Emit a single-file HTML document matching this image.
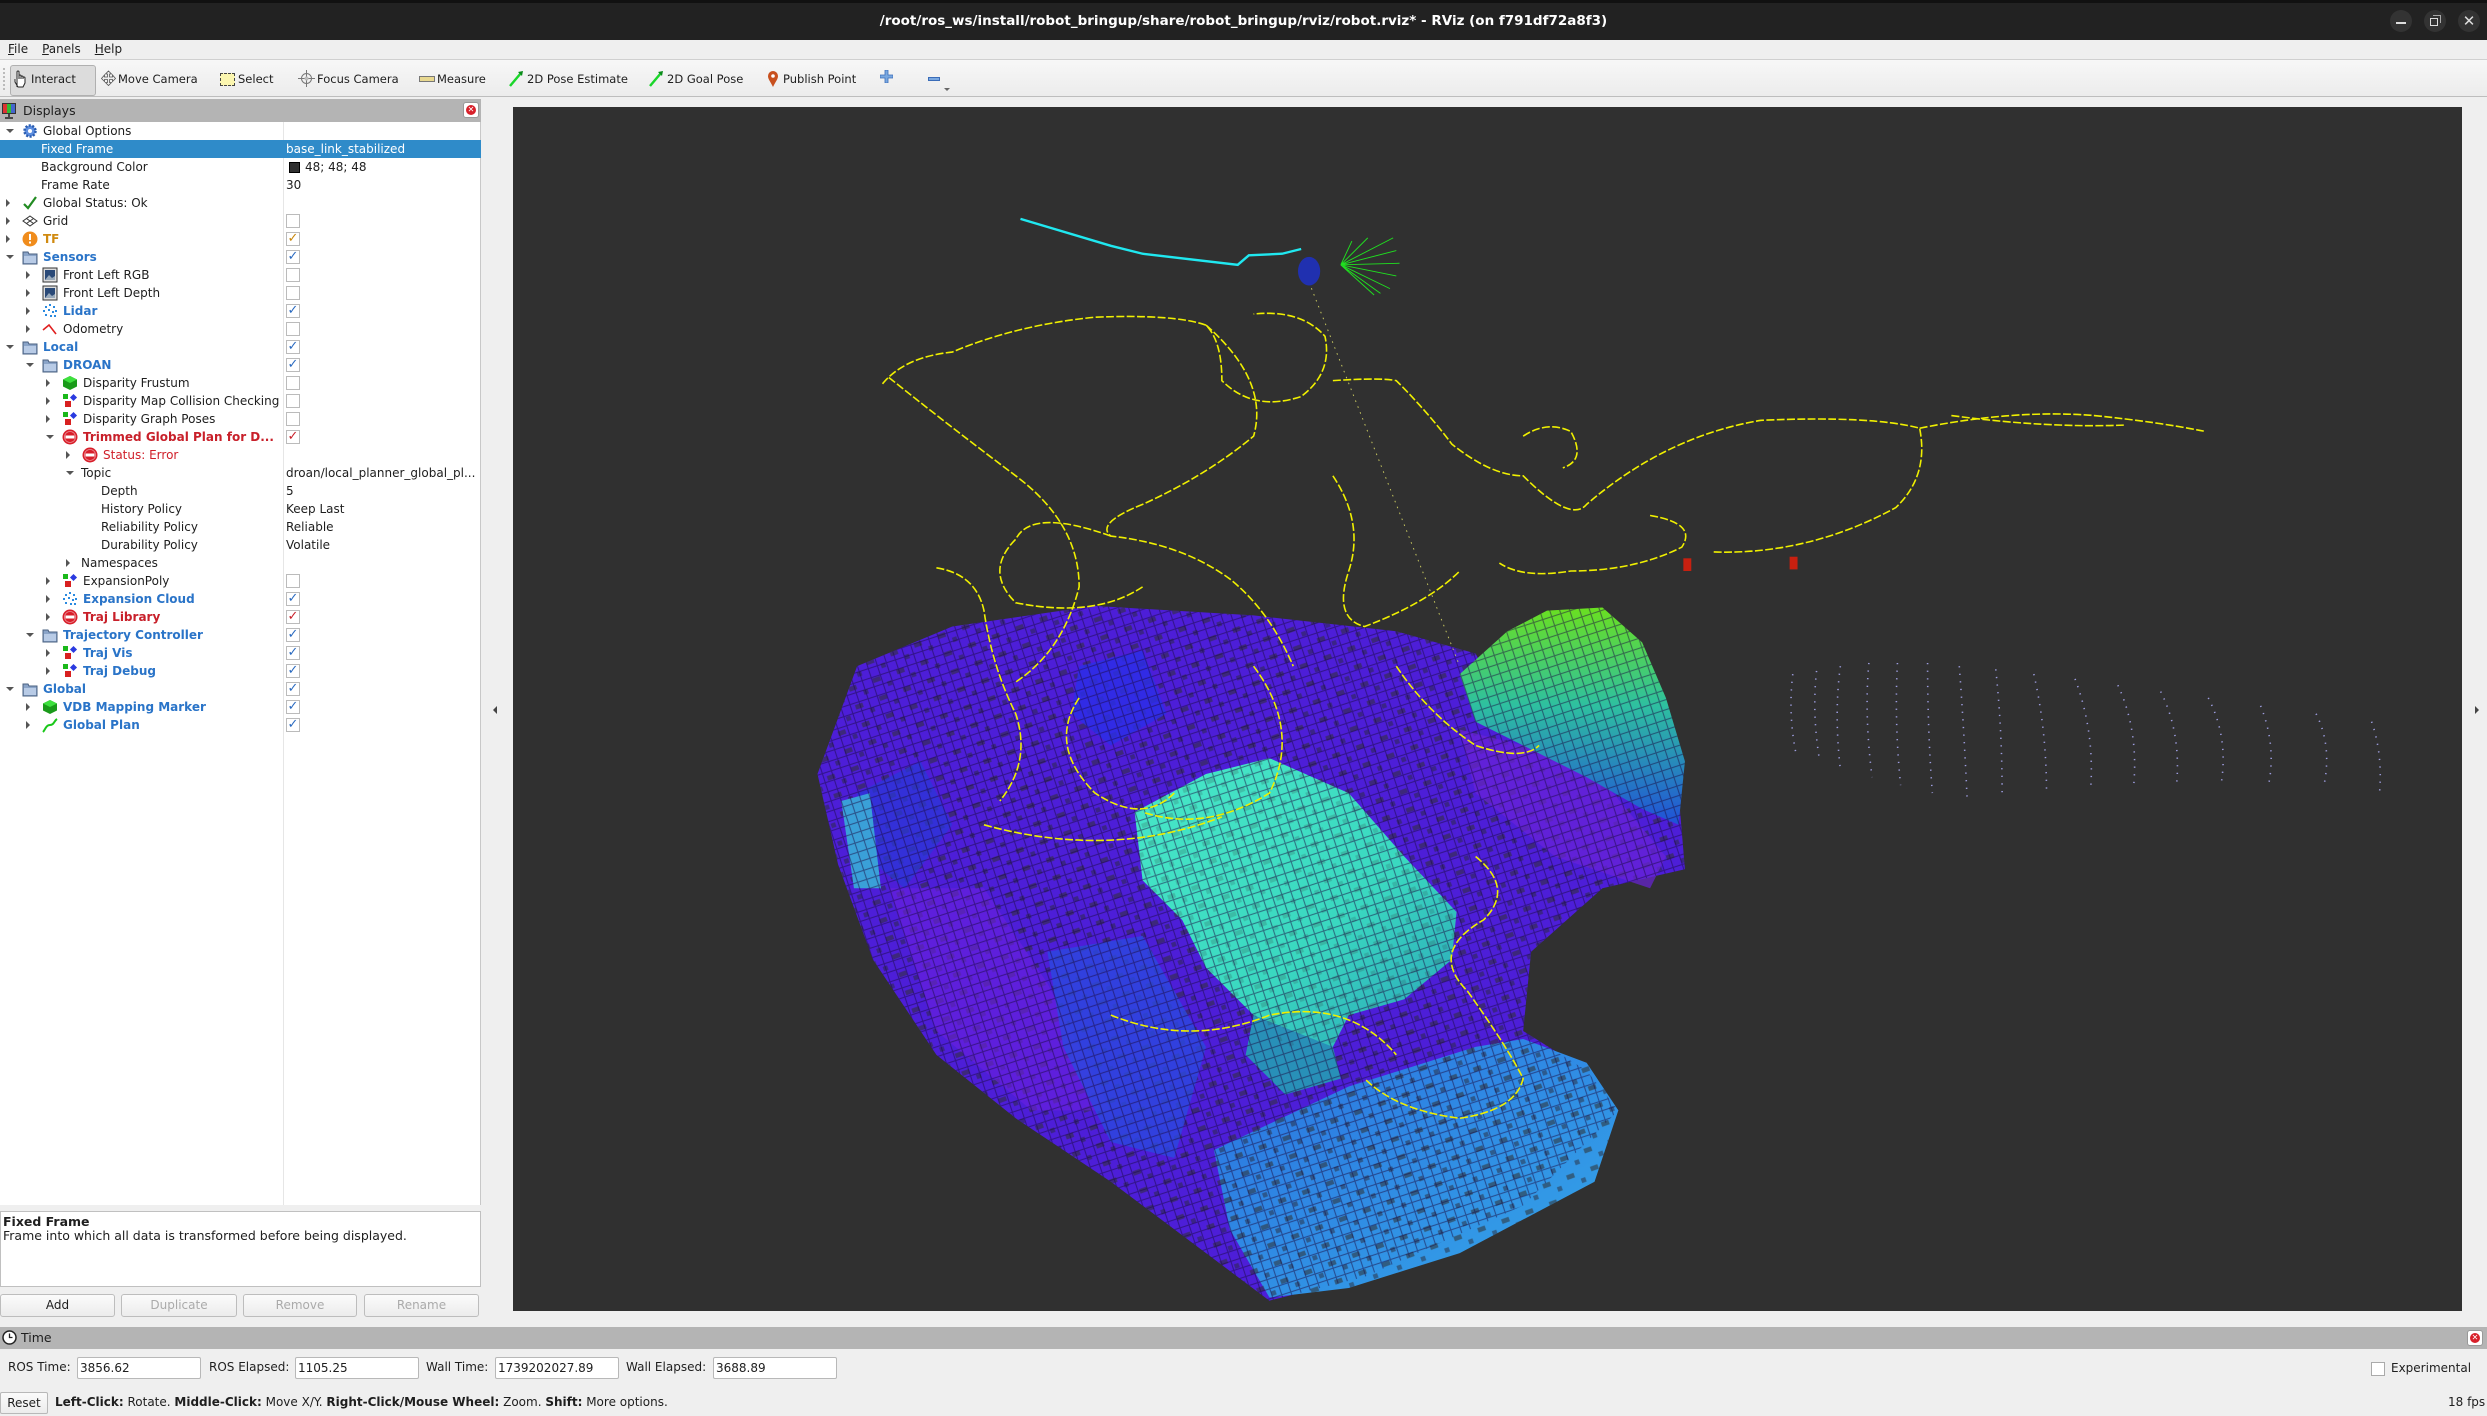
<!DOCTYPE html>
<html><head><meta charset="utf-8">
<style>
*{margin:0;padding:0;box-sizing:border-box}
body{width:2487px;height:1416px;overflow:hidden;background:#efefef;font-family:"DejaVu Sans","Liberation Sans",sans-serif;font-size:12px;color:#1e1e1e;position:relative}
.a{position:absolute}
.title{left:0;top:0;width:2487px;height:40px;background:#222;border-top:3px solid #111;color:#fff;font-weight:bold;font-size:13.5px;text-align:center;line-height:36px}
.wb{width:22px;height:22px;border-radius:50%;background:#333;top:10px}
.menu{left:0;top:40px;width:2487px;height:19px;background:#efefef;font-size:12px;line-height:19px}
.menu span{margin-left:8px;margin-right:6px}
.tb{left:0;top:59px;width:2487px;height:38px;background:linear-gradient(#f7f7f7,#ececec);border-top:1px solid #d0d0d0;border-bottom:1px solid #bdbdbd;font-size:11.5px}
.tb .t{position:absolute;top:12px;white-space:nowrap}
.tb svg{position:absolute;top:10px}
.hdr{background:#b4b4b4;height:23px;line-height:23px;font-size:12.5px}
.tree{left:0;top:122px;width:481px;height:1083px;background:#fff;border-right:1px solid #c8c8c8}
.row{position:absolute;left:0;width:481px;height:18px;line-height:18px;white-space:nowrap}
.row .tx{position:absolute;top:0}
.row .ic{position:absolute;top:1px}
.ar{position:absolute;top:5px;width:0;height:0}
.r{border-left:4px solid #555;border-top:4px solid transparent;border-bottom:4px solid transparent;top:5px}
.d{border-top:4px solid #555;border-left:4px solid transparent;border-right:4px solid transparent;top:7px}
.v{position:absolute;left:286px;top:0}
.cb{position:absolute;left:286px;top:2px;width:14px;height:14px;border:1px solid #bbb;background:#fff;font-size:13px;font-weight:bold;line-height:12px;text-align:center}
.blue{color:#2a74c8;font-weight:bold}
.red{color:#c8202a;font-weight:bold}
.btn{position:absolute;top:1294px;height:23px;border:1px solid #bdbdbd;border-radius:3px;background:linear-gradient(#fbfbfb,#ececec);text-align:center;line-height:21px;font-size:12px}
.fld{position:absolute;top:1357px;height:22px;border:1px solid #b8b8b8;border-radius:2px;background:#fff;line-height:20px;padding-left:2px;font-size:12px}
.lb{position:absolute;top:1360px;font-size:12px}
</style></head><body>

<div class="a title">/root/ros_ws/install/robot_bringup/share/robot_bringup/rviz/robot.rviz* - RViz (on f791df72a8f3)</div>
<div class="a wb" style="left:2390px"><div class="a" style="left:6px;top:12px;width:10px;height:2px;background:#ddd"></div></div>
<div class="a wb" style="left:2424px"><div class="a" style="left:6px;top:8px;width:8px;height:8px;border:1.5px solid #ddd"></div><div class="a" style="left:9px;top:5px;width:8px;height:8px;border-top:1.5px solid #aaa;border-right:1.5px solid #aaa"></div></div>
<div class="a wb" style="left:2458px;color:#ddd;font-size:15px;text-align:center;line-height:22px">✕</div>

<div class="a menu"><span><u>F</u>ile</span><span><u>P</u>anels</span><span><u>H</u>elp</span></div>

<div class="a tb">
 <div class="a" style="left:3px;top:8px;width:3px;height:22px;border-left:2px dotted #bbb"></div>
 <div class="a" style="left:10px;top:5px;width:86px;height:31px;background:#dcdcdc;border:1px solid #b0b0b0;border-radius:3px"></div>
 <svg style="left:13px" width="16" height="18" viewBox="0 0 16 18"><path d="M4 17V8M4 8V2a1 1 0 012 0v7M6 6a1 1 0 012 0v3M8 7a1 1 0 012 0v2M10 8a1 1 0 012 0v5l-2 4H5L2 12V9" fill="#fff" stroke="#222" stroke-width="1"/></svg>
 <div class="t" style="left:31px">Interact</div>
 <svg style="left:100px" width="17" height="17" viewBox="0 0 17 17"><path d="M8.5 1l3 3h-2v3h3V5l3 3.5-3 3v-2h-3v3h2l-3 3-3-3h2v-3h-3v2l-3-3 3-3.5v2h3V4h-2z" fill="#eee" stroke="#555" stroke-width=".8"/></svg>
 <div class="t" style="left:118px">Move Camera</div>
 <div class="a" style="left:220px;top:13px;width:15px;height:13px;background:#fbf6b0;border:1px dashed #444"></div>
 <div class="t" style="left:238px">Select</div>
 <svg style="left:298px" width="17" height="17" viewBox="0 0 17 17"><circle cx="8.5" cy="8.5" r="5" fill="none" stroke="#777"/><path d="M8.5 0v17M0 8.5h17" stroke="#777"/><circle cx="8.5" cy="8.5" r="2" fill="#bbb"/></svg>
 <div class="t" style="left:317px">Focus Camera</div>
 <div class="a" style="left:419px;top:16px;width:16px;height:6px;background:#e8d890;border:1px solid #777"></div>
 <div class="t" style="left:437px">Measure</div>
 <svg style="left:508px" width="16" height="17" viewBox="0 0 16 17"><path d="M2 16L13 3" stroke="#1ad62a" stroke-width="2.5"/><path d="M10 2l5-1-1 5z" fill="#0a8a1a"/></svg>
 <div class="t" style="left:527px">2D Pose Estimate</div>
 <svg style="left:648px" width="16" height="17" viewBox="0 0 16 17"><path d="M2 16L13 3" stroke="#1ad62a" stroke-width="2.5"/><path d="M10 2l5-1-1 5z" fill="#0a8a1a"/></svg>
 <div class="t" style="left:667px">2D Goal Pose</div>
 <svg style="left:767px" width="12" height="18" viewBox="0 0 12 18"><path d="M6 17C3 11 1 9 1 6a5 5 0 0110 0c0 3-2 5-5 11z" fill="#c8501e"/><circle cx="6" cy="6" r="1.8" fill="#fff"/></svg>
 <div class="t" style="left:783px">Publish Point</div>
 <svg style="left:880px" width="13" height="13" viewBox="0 0 13 13" ><path d="M5 0h3v5h5v3H8v5H5V8H0V5h5z" fill="#7aa8e0" stroke="#3a6cb8" stroke-width=".8"/></svg>
 <div class="a" style="left:928px;top:17px;width:12px;height:4px;background:#7aa8e0;border:1px solid #3a6cb8"></div>
 <div class="a" style="left:944px;top:28px;border-top:3px solid #666;border-left:3px solid transparent;border-right:3px solid transparent"></div>
</div>

<div class="a hdr" style="left:0;top:99px;width:481px">
 <svg class="a" style="left:1px;top:3px" width="16" height="17" viewBox="0 0 16 17"><rect x="1" y="1" width="14" height="11" fill="#333"/><rect x="2" y="2" width="4" height="9" fill="#d33"/><rect x="6" y="2" width="4" height="9" fill="#3b3"/><rect x="10" y="2" width="4" height="9" fill="#46c"/><path d="M8 12v3M4 16h8" stroke="#222" stroke-width="1.5"/></svg>
 <span class="a" style="left:23px">Displays</span>
 <div class="a" style="left:463px;top:3px;width:16px;height:16px;background:#fff;border:1px solid #999;border-radius:3px"><div class="a" style="left:2px;top:2px;width:10px;height:10px;border-radius:50%;background:#d8202a;color:#fff;font-size:8px;line-height:10px;text-align:center">✕</div></div>
</div>

<div class="a tree">
 <div class="a" style="left:283px;top:0;width:1px;height:1083px;background:#e6e6e6"></div>
</div>

<svg width="0" height="0" style="position:absolute">
 <defs>
  <symbol id="gear" viewBox="0 0 16 16"><circle cx="8" cy="8" r="5.5" fill="#5d8ee0" stroke="#2a5cb0" stroke-width="2.5" stroke-dasharray="2 1.5"/><circle cx="8" cy="8" r="2" fill="#fff"/></symbol>
  <symbol id="chk" viewBox="0 0 16 16"><path d="M2 9l4 4 8-11" fill="none" stroke="#228b22" stroke-width="2.2"/></symbol>
  <symbol id="grid" viewBox="0 0 16 16"><path d="M8 3l7 5-7 5-7-5z M4.5 5.5l7 5M11.5 5.5l-7 5" fill="none" stroke="#333" stroke-width="1"/></symbol>
  <symbol id="warn" viewBox="0 0 16 16"><circle cx="8" cy="8" r="7.5" fill="#f08c1c"/><rect x="7" y="3" width="2" height="6" fill="#fff"/><rect x="7" y="10.5" width="2" height="2" fill="#fff"/></symbol>
  <symbol id="fold" viewBox="0 0 16 16"><path d="M1 3h5l1 2h8v10H1z" fill="#8aa4c8" stroke="#4a6080"/><rect x="2" y="7" width="12" height="7" fill="#b8cbe6"/></symbol>
  <symbol id="img" viewBox="0 0 16 16"><rect x="1" y="1" width="14" height="14" fill="#ddd" stroke="#333"/><rect x="3" y="3" width="10" height="10" fill="#2a4a78"/><path d="M3 13l4-5 3 3 3-2v4z" fill="#9ab"/></symbol>
  <symbol id="cloud" viewBox="0 0 16 16"><g fill="#2a8ae0"><rect x="7" y="1" width="2" height="2"/><rect x="3" y="3" width="2" height="2"/><rect x="11" y="3" width="2" height="2"/><rect x="1" y="7" width="2" height="2"/><rect x="6" y="6" width="2" height="2"/><rect x="10" y="8" width="2" height="2"/><rect x="13" y="7" width="2" height="2"/><rect x="3" y="11" width="2" height="2"/><rect x="8" y="12" width="2" height="2"/><rect x="12" y="12" width="2" height="2"/></g></symbol>
  <symbol id="odom" viewBox="0 0 16 16"><path d="M1 9l6-5 7 9" fill="none" stroke="#e02020" stroke-width="1.6"/></symbol>
  <symbol id="cube" viewBox="0 0 16 16"><path d="M8 1l7 3.5v7L8 15 1 11.5v-7z" fill="#1a9a1a"/><path d="M8 1l7 3.5L8 8 1 4.5z" fill="#3ee03e"/></symbol>
  <symbol id="mk" viewBox="0 0 16 16"><rect x="1" y="1" width="5" height="5" fill="#1ab81a"/><rect x="9" y="2" width="5" height="5" fill="#2a3ae0" transform="rotate(45 11.5 4.5)"/><rect x="3" y="8" width="6" height="6" fill="#d82020"/></symbol>
  <symbol id="err" viewBox="0 0 16 16"><circle cx="8" cy="8" r="7.5" fill="#d81e2a"/><circle cx="8" cy="8" r="5.5" fill="none" stroke="#fff" stroke-width=".8" opacity=".5"/><rect x="3.5" y="6.5" width="9" height="3" fill="#fff"/></symbol>
  <symbol id="plan" viewBox="0 0 16 16"><path d="M1 15c2-2 3-7 7-7s4-4 7-6" fill="none" stroke="#1ac81a" stroke-width="2"/></symbol>
 </defs>
</svg>

<div class="row" style="top:122px"><div class="ar d" style="left:6px"></div><svg class="ic" style="left:22px" width="16" height="16"><use href="#gear"/></svg><span class="tx" style="left:43px">Global Options</span></div>
<div class="row" style="top:140px;background:#2f8bc9;color:#fff"><span class="tx" style="left:41px">Fixed Frame</span><span class="v">base_link_stabilized</span></div>
<div class="row" style="top:158px"><span class="tx" style="left:41px">Background Color</span><div class="a" style="left:289px;top:4px;width:11px;height:11px;background:#303030;border:1px solid #000"></div><span class="v" style="left:305px">48; 48; 48</span></div>
<div class="row" style="top:176px"><span class="tx" style="left:41px">Frame Rate</span><span class="v">30</span></div>
<div class="row" style="top:194px"><div class="ar r" style="left:6px"></div><svg class="ic" style="left:22px" width="16" height="16"><use href="#chk"/></svg><span class="tx" style="left:43px">Global Status: Ok</span></div>
<div class="row" style="top:212px"><div class="ar r" style="left:6px"></div><svg class="ic" style="left:22px" width="16" height="16"><use href="#grid"/></svg><span class="tx" style="left:43px">Grid</span><div class="cb"></div></div>
<div class="row" style="top:230px"><div class="ar r" style="left:6px"></div><svg class="ic" style="left:22px" width="16" height="16"><use href="#warn"/></svg><span class="tx" style="left:43px;color:#d08a10;font-weight:bold">TF</span><div class="cb" style="color:#c8860a">✓</div></div>
<div class="row" style="top:248px"><div class="ar d" style="left:6px"></div><svg class="ic" style="left:22px" width="16" height="16"><use href="#fold"/></svg><span class="tx blue" style="left:43px">Sensors</span><div class="cb" style="color:#2a6ac0">✓</div></div>
<div class="row" style="top:266px"><div class="ar r" style="left:26px"></div><svg class="ic" style="left:42px" width="16" height="16"><use href="#img"/></svg><span class="tx" style="left:63px">Front Left RGB</span><div class="cb"></div></div>
<div class="row" style="top:284px"><div class="ar r" style="left:26px"></div><svg class="ic" style="left:42px" width="16" height="16"><use href="#img"/></svg><span class="tx" style="left:63px">Front Left Depth</span><div class="cb"></div></div>
<div class="row" style="top:302px"><div class="ar r" style="left:26px"></div><svg class="ic" style="left:42px" width="16" height="16"><use href="#cloud"/></svg><span class="tx blue" style="left:63px">Lidar</span><div class="cb" style="color:#2a6ac0">✓</div></div>
<div class="row" style="top:320px"><div class="ar r" style="left:26px"></div><svg class="ic" style="left:42px" width="16" height="16"><use href="#odom"/></svg><span class="tx" style="left:63px">Odometry</span><div class="cb"></div></div>
<div class="row" style="top:338px"><div class="ar d" style="left:6px"></div><svg class="ic" style="left:22px" width="16" height="16"><use href="#fold"/></svg><span class="tx blue" style="left:43px">Local</span><div class="cb" style="color:#2a6ac0">✓</div></div>
<div class="row" style="top:356px"><div class="ar d" style="left:26px"></div><svg class="ic" style="left:42px" width="16" height="16"><use href="#fold"/></svg><span class="tx blue" style="left:63px">DROAN</span><div class="cb" style="color:#2a6ac0">✓</div></div>
<div class="row" style="top:374px"><div class="ar r" style="left:46px"></div><svg class="ic" style="left:62px" width="16" height="16"><use href="#cube"/></svg><span class="tx" style="left:83px">Disparity Frustum</span><div class="cb"></div></div>
<div class="row" style="top:392px"><div class="ar r" style="left:46px"></div><svg class="ic" style="left:62px" width="16" height="16"><use href="#mk"/></svg><span class="tx" style="left:83px">Disparity Map Collision Checking</span><div class="cb"></div></div>
<div class="row" style="top:410px"><div class="ar r" style="left:46px"></div><svg class="ic" style="left:62px" width="16" height="16"><use href="#mk"/></svg><span class="tx" style="left:83px">Disparity Graph Poses</span><div class="cb"></div></div>
<div class="row" style="top:428px"><div class="ar d" style="left:46px"></div><svg class="ic" style="left:62px" width="16" height="16"><use href="#err"/></svg><span class="tx red" style="left:83px">Trimmed Global Plan for D...</span><div class="cb" style="color:#c8202a">✓</div></div>
<div class="row" style="top:446px"><div class="ar r" style="left:66px"></div><svg class="ic" style="left:82px" width="16" height="16"><use href="#err"/></svg><span class="tx" style="left:103px;color:#d0202a">Status: Error</span></div>
<div class="row" style="top:464px"><div class="ar d" style="left:66px"></div><span class="tx" style="left:81px">Topic</span><span class="v">droan/local_planner_global_pl...</span></div>
<div class="row" style="top:482px"><span class="tx" style="left:101px">Depth</span><span class="v">5</span></div>
<div class="row" style="top:500px"><span class="tx" style="left:101px">History Policy</span><span class="v">Keep Last</span></div>
<div class="row" style="top:518px"><span class="tx" style="left:101px">Reliability Policy</span><span class="v">Reliable</span></div>
<div class="row" style="top:536px"><span class="tx" style="left:101px">Durability Policy</span><span class="v">Volatile</span></div>
<div class="row" style="top:554px"><div class="ar r" style="left:66px"></div><span class="tx" style="left:81px">Namespaces</span></div>
<div class="row" style="top:572px"><div class="ar r" style="left:46px"></div><svg class="ic" style="left:62px" width="16" height="16"><use href="#mk"/></svg><span class="tx" style="left:83px">ExpansionPoly</span><div class="cb"></div></div>
<div class="row" style="top:590px"><div class="ar r" style="left:46px"></div><svg class="ic" style="left:62px" width="16" height="16"><use href="#cloud"/></svg><span class="tx blue" style="left:83px">Expansion Cloud</span><div class="cb" style="color:#2a6ac0">✓</div></div>
<div class="row" style="top:608px"><div class="ar r" style="left:46px"></div><svg class="ic" style="left:62px" width="16" height="16"><use href="#err"/></svg><span class="tx red" style="left:83px">Traj Library</span><div class="cb" style="color:#c8202a">✓</div></div>
<div class="row" style="top:626px"><div class="ar d" style="left:26px"></div><svg class="ic" style="left:42px" width="16" height="16"><use href="#fold"/></svg><span class="tx blue" style="left:63px">Trajectory Controller</span><div class="cb" style="color:#2a6ac0">✓</div></div>
<div class="row" style="top:644px"><div class="ar r" style="left:46px"></div><svg class="ic" style="left:62px" width="16" height="16"><use href="#mk"/></svg><span class="tx blue" style="left:83px">Traj Vis</span><div class="cb" style="color:#2a6ac0">✓</div></div>
<div class="row" style="top:662px"><div class="ar r" style="left:46px"></div><svg class="ic" style="left:62px" width="16" height="16"><use href="#mk"/></svg><span class="tx blue" style="left:83px">Traj Debug</span><div class="cb" style="color:#2a6ac0">✓</div></div>
<div class="row" style="top:680px"><div class="ar d" style="left:6px"></div><svg class="ic" style="left:22px" width="16" height="16"><use href="#fold"/></svg><span class="tx blue" style="left:43px">Global</span><div class="cb" style="color:#2a6ac0">✓</div></div>
<div class="row" style="top:698px"><div class="ar r" style="left:26px"></div><svg class="ic" style="left:42px" width="16" height="16"><use href="#cube"/></svg><span class="tx blue" style="left:63px">VDB Mapping Marker</span><div class="cb" style="color:#2a6ac0">✓</div></div>
<div class="row" style="top:716px"><div class="ar r" style="left:26px"></div><svg class="ic" style="left:42px" width="16" height="16"><use href="#plan"/></svg><span class="tx blue" style="left:63px">Global Plan</span><div class="cb" style="color:#2a6ac0">✓</div></div>

<div class="a" style="left:0;top:1211px;width:481px;height:76px;background:#fff;border:1px solid #c0c0c0;padding:3px 2px;font-size:12.5px;line-height:14px"><b>Fixed Frame</b><br>Frame into which all data is transformed before being displayed.</div>
<div class="btn" style="left:0;width:115px">Add</div>
<div class="btn" style="left:121px;width:116px;color:#aaa">Duplicate</div>
<div class="btn" style="left:243px;width:114px;color:#aaa">Remove</div>
<div class="btn" style="left:364px;width:115px;color:#aaa">Rename</div>

<div class="a" style="left:493px;top:706px;border-right:4px solid #444;border-top:4px solid transparent;border-bottom:4px solid transparent"></div>
<div class="a" style="left:2475px;top:706px;border-left:4px solid #444;border-top:4px solid transparent;border-bottom:4px solid transparent"></div>

<svg class="a" style="left:513px;top:107px" width="1949" height="1204" viewBox="323 67.5 1229 759" preserveAspectRatio="none">
 <defs>
  <pattern id="vox" width="6" height="6" patternUnits="userSpaceOnUse" patternTransform="rotate(-18)"><rect width="6" height="6" fill="none" stroke="#1a0a40" stroke-width=".7" opacity=".5"/></pattern>
  <pattern id="holes" width="16" height="12" patternUnits="userSpaceOnUse" patternTransform="rotate(-20)"><rect x="2" y="2" width="5" height="3" fill="#303030" opacity=".55"/><rect x="10" y="7" width="3" height="3" fill="#2a2a38" opacity=".5"/></pattern>
  <linearGradient id="wall" x1="0" y1="0" x2="0" y2="1"><stop offset="0" stop-color="#6ae020"/><stop offset=".45" stop-color="#2ec0a0"/><stop offset="1" stop-color="#2050d8"/></linearGradient>
  <linearGradient id="cyan" x1="0" y1="0" x2="1" y2="1"><stop offset="0" stop-color="#48e8c8"/><stop offset=".6" stop-color="#3ad8c0"/><stop offset="1" stop-color="#28a0b8"/></linearGradient>
  <linearGradient id="bl" x1="0" y1="0" x2="1" y2="1"><stop offset="0" stop-color="#2a70e0"/><stop offset="1" stop-color="#35a8e8"/></linearGradient>
  <clipPath id="massclip">
   <path d="M515,488 L540,420 L600,395 L690,382 L790,388 L880,398 L930,412 L960,470 L1030,480 L1058,500 L1062,548 L1010,560 L965,600 L960,650 L1000,675 L1020,700 L960,760 L860,805 L800,820 L760,790 L700,745 L640,705 L590,665 L550,605 L528,545 Z"/>
   <path d="M920,425 L950,398 L975,385 L1010,383 L1035,405 L1050,440 L1062,480 L1058,520 L1035,510 L1000,490 L960,470 L930,455 Z"/>
  </clipPath>
 </defs>
 <rect x="323" y="67.5" width="1229" height="759" fill="#303030"/>
 <g fill="none" stroke="#a8a8f0" stroke-width="1" stroke-dasharray="0.8 4" opacity=".9">
  <path d="M1130,425 Q1127,450 1132,475"/><path d="M1145,423 Q1142,450 1147,480"/><path d="M1160,420 Q1156,450 1160,485"/><path d="M1178,418 Q1175,450 1180,490"/><path d="M1196,418 Q1194,455 1198,495"/><path d="M1215,418 Q1215,460 1218,500"/><path d="M1235,420 Q1238,460 1240,505"/><path d="M1258,422 Q1262,460 1262,500"/><path d="M1282,425 Q1290,460 1290,500"/><path d="M1308,428 Q1320,460 1318,495"/><path d="M1335,432 Q1348,460 1345,495"/><path d="M1362,436 Q1375,462 1372,495"/><path d="M1392,440 Q1405,465 1400,495"/><path d="M1425,445 Q1435,470 1430,495"/><path d="M1460,450 Q1470,470 1465,495"/><path d="M1495,455 Q1502,475 1500,500"/>
 </g>
 <path d="M515,488 L540,420 L600,395 L690,382 L790,388 L880,398 L930,412 L960,470 L1030,480 L1058,500 L1062,548 L1010,560 L965,600 L960,650 L1000,675 L1020,700 L960,760 L860,805 L800,820 L760,790 L700,745 L640,705 L590,665 L550,605 L528,545 Z" fill="#4d1ed8"/>
 <path d="M515,488 L540,420 L600,395 L690,382 L790,388 L880,398 L930,412 L960,470 L1030,480 L1058,500 L1062,548 L1010,560 L965,600 L960,650 L1000,675 L1020,700 L960,760 L860,805 L800,820 L760,790 L700,745 L640,705 L590,665 L550,605 L528,545 Z" fill="url(#holes)"/>
 <path d="M560,560 L620,560 L660,620 L700,700 L650,700 L590,650 Z" fill="#6a20e0" opacity=".6"/>
 <path d="M540,500 L580,480 L600,520 L570,560 L545,540 Z" fill="#2838d8" opacity=".7"/>
 <path d="M530,505 L548,500 L555,560 L538,560 Z" fill="#3aa0d8"/>
 <path d="M660,600 L720,590 L760,660 L740,730 L700,720 L670,660 Z" fill="#2a48e0" opacity=".8"/>
 <path d="M680,420 L720,410 L735,450 L700,470 L675,450 Z" fill="#2a2ee8" opacity=".8"/>
 <path d="M920,460 L1000,480 L1050,540 L1040,560 L980,540 L930,500 Z" fill="#6a22d8" opacity=".7"/>
 <path d="M765,725 L850,685 L930,660 L960,655 L1000,670 L1020,700 L1005,745 L920,790 L850,812 L800,818 L775,775 Z" fill="url(#bl)"/>
 <path d="M765,725 L850,685 L930,660 L960,655 L1000,670 L1020,700 L1005,745 L920,790 L850,812 L800,818 L775,775 Z" fill="url(#holes)"/>
 <path d="M920,425 L950,398 L975,385 L1010,383 L1035,405 L1050,440 L1062,480 L1058,520 L1035,510 L1000,490 L960,470 L930,455 Z" fill="url(#wall)"/>
 <path d="M715,512 L760,488 L800,478 L850,500 L885,540 L918,575 L915,605 L885,630 L850,640 L840,660 L810,660 L790,640 L760,610 L745,580 L720,555 Z" fill="url(#cyan)"/>
 <path d="M790,640 L840,660 L845,680 L810,690 L785,665 Z" fill="#2890b8"/>
 <path d="M715,512 L760,488 L800,478 L850,500 L885,540 L918,575 L915,605 L885,630 L850,640 L840,660 L810,660 L790,640 L760,610 L745,580 L720,555 Z" fill="url(#holes)" opacity=".35"/>
 <rect x="500" y="370" width="580" height="460" fill="url(#vox)" clip-path="url(#massclip)"/>
 <g fill="none" stroke="#f0f000" stroke-width="1" stroke-dasharray="5 1.5">
  <path d="M556,242 Q570,225 600,222 Q640,205 690,200 Q740,198 760,205 Q770,215 770,240 Q790,260 820,250 Q840,235 835,212 Q820,195 790,198"/>
  <path d="M560,238 Q600,270 640,300 Q680,330 680,370 Q670,410 640,430"/>
  <path d="M840,240 Q870,238 880,240 Q900,260 915,280 Q940,300 960,300 Q990,330 1000,318 Q1050,275 1110,265 Q1180,262 1210,270 Q1216,300 1195,320 Q1140,350 1080,348"/>
  <path d="M1210,270 Q1270,258 1320,262 Q1360,266 1390,272"/>
  <path d="M1230,262 Q1290,270 1340,268"/>
  <path d="M760,205 Q800,240 790,275 Q760,300 720,318 Q690,330 700,338 Q745,343 775,365 Q800,385 815,420"/>
  <path d="M700,338 Q650,320 640,340 Q620,360 640,380 Q690,390 720,370"/>
  <path d="M960,275 Q975,265 990,272 Q1000,290 985,295"/>
  <path d="M1040,325 Q1070,330 1060,345 Q1030,360 990,360 Q960,365 945,355"/>
  <path d="M590,358 Q615,362 620,385 Q625,420 640,450 Q650,480 630,505"/>
  <path d="M790,420 Q820,460 800,500 Q760,525 720,512"/>
  <path d="M880,420 Q900,450 930,470 Q960,480 970,470"/>
  <path d="M930,540 Q955,560 935,580 Q900,600 925,625 Q950,660 960,680 Q955,700 920,705 Q880,700 860,680"/>
  <path d="M700,640 Q750,660 800,640 Q850,630 880,665"/>
  <path d="M620,520 Q700,542 770,515"/>
  <path d="M680,440 Q660,470 690,500 Q720,520 740,500"/>
  <path d="M840,300 Q860,330 850,360 Q840,390 860,395 Q900,380 920,360"/>
 </g>
 <path d="M825,178 L920,420" stroke="#c8c860" stroke-width=".6" stroke-dasharray="1 3" fill="none"/>
 <polyline points="643,138 700,155 720,160 780,167 787,161 808,160 820,157" fill="none" stroke="#20e8f0" stroke-width="1.5"/>
 <g stroke="#20e020" stroke-width=".6">
  <path d="M845,167 L878,150 M845,167 L880,158 M845,167 L882,166 M845,167 L880,174 M845,167 L876,182 M845,167 L866,186 M845,167 L852,152 M845,167 L862,150 M845,167 L870,185"/>
 </g>
 <ellipse cx="825" cy="171" rx="7" ry="9" fill="#2030b0"/>
 <rect x="1061" y="352" width="5" height="8" fill="#c82010"/>
 <rect x="1128" y="351" width="5" height="8" fill="#c82010"/>
</svg>

<div class="a hdr" style="left:0;top:1327px;width:2487px;height:22px;line-height:22px">
 <svg class="a" style="left:2px;top:3px" width="15" height="15" viewBox="0 0 15 15"><circle cx="7.5" cy="7.5" r="6.5" fill="#fff" stroke="#222" stroke-width="1.5"/><path d="M7.5 3.5v4h3" stroke="#222" stroke-width="1.3" fill="none"/></svg>
 <span class="a" style="left:21px">Time</span>
 <div class="a" style="left:2467px;top:3px;width:16px;height:16px;background:#fff;border:1px solid #999;border-radius:3px"><div class="a" style="left:2px;top:2px;width:10px;height:10px;border-radius:50%;background:#d8202a;color:#fff;font-size:8px;line-height:10px;text-align:center">✕</div></div>
</div>
<span class="lb" style="left:8px">ROS Time:</span><div class="fld" style="left:77px;width:124px">3856.62</div>
<span class="lb" style="left:209px">ROS Elapsed:</span><div class="fld" style="left:295px;width:124px">1105.25</div>
<span class="lb" style="left:426px">Wall Time:</span><div class="fld" style="left:495px;width:124px">1739202027.89</div>
<span class="lb" style="left:626px">Wall Elapsed:</span><div class="fld" style="left:713px;width:124px">3688.89</div>
<div class="a" style="left:2371px;top:1362px;width:14px;height:14px;border:1px solid #aaa;background:#fff"></div>
<span class="lb" style="left:2391px;top:1361px">Experimental</span>
<div class="a" style="left:0;top:1392px;width:48px;height:22px;border:1px solid #b8b8b8;border-radius:2px;background:linear-gradient(#fbfbfb,#ececec);text-align:center;line-height:20px">Reset</div>
<span class="lb" style="left:55px;top:1395px"><b>Left-Click:</b> Rotate. <b>Middle-Click:</b> Move X/Y. <b>Right-Click/Mouse Wheel:</b> Zoom. <b>Shift:</b> More options.</span>
<span class="lb" style="left:2448px;top:1395px">18 fps</span>
</body></html>
